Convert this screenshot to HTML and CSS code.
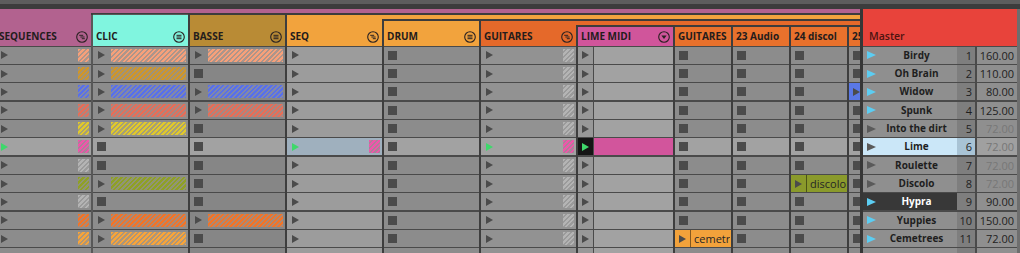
FILE: index.html
```html
<!DOCTYPE html>
<html lang="fr">
<head>
    <meta charset="UTF-8">
    <meta name="viewport" content="width=device-width, initial-scale=1.0">
    <title>Session</title>

    <link rel="stylesheet" href="styles.css">
</head>
<body>
    <svg class="defs" width="0" height="0" aria-hidden="true">
        <symbol id="i-menu" viewBox="0 0 12 12">
            <circle cx="6" cy="6" r="5.3" fill="none" stroke="currentColor" stroke-width="1.1"/>
            <path d="M3.5 4.3h5M3.5 6h5M3.5 7.7h5" stroke="currentColor" stroke-width="1"/>
        </symbol>
        <symbol id="i-fold" viewBox="0 0 12 12">
            <circle cx="6" cy="6" r="5.3" fill="none" stroke="currentColor" stroke-width="1.1"/>
            <path d="M3.2 4.3h4M4.4 6h4.2M5.8 7.7h3" stroke="currentColor" stroke-width="1"/>
        </symbol>
        <symbol id="i-drop" viewBox="0 0 12 12">
            <circle cx="6" cy="6" r="5.3" fill="none" stroke="currentColor" stroke-width="1.1"/>
            <path d="M3.4 4.6h5.2L6 8z" fill="currentColor"/>
        </symbol>
    </svg>

    <div class="topbar"></div>

    <div class="main">
        <div class="tracks">
            <!-- SEQUENCES group track -->
            <div class="track">
                <div class="head t-seqs"><span class="name">SEQUENCES</span><svg class="ico"><use href="#i-fold"/></svg></div>
                <div class="cells">
                    <div class="slot"><i class="play"></i><span class="mini c-salmon"></span></div>
                    <div class="slot"><i class="play"></i><span class="mini c-ochre"></span></div>
                    <div class="slot"><i class="play"></i><span class="mini c-blue"></span></div>
                    <div class="slot"><i class="play"></i><span class="mini c-red"></span></div>
                    <div class="slot"><i class="play"></i><span class="mini c-yellow"></span></div>
                    <div class="slot on"><i class="play go"></i><span class="mini c-pink"></span></div>
                    <div class="slot"><i class="play"></i><span class="mini c-grey"></span></div>
                    <div class="slot"><i class="play"></i><span class="mini c-olive"></span></div>
                    <div class="slot"><i class="play"></i><span class="mini c-grey"></span></div>
                    <div class="slot"><i class="play"></i><span class="mini c-orange"></span></div>
                    <div class="slot"><i class="play"></i><span class="mini c-lorange"></span></div>
                    <div class="slot"></div>
                </div>
            </div>

            <div class="group">
                <div class="band t-seqs"></div>
                <div class="group-row">
                    <div class="track sel">
                        <div class="head t-clic"><span class="name">CLIC</span><svg class="ico"><use href="#i-menu"/></svg></div>
                        <div class="cells">
                            <div class="slot"><i class="play"></i><span class="clip c-salmon"></span></div>
                            <div class="slot"><i class="play"></i><span class="clip c-ochre"></span></div>
                            <div class="slot"><i class="play"></i><span class="clip c-blue"></span></div>
                            <div class="slot"><i class="play"></i><span class="clip c-red"></span></div>
                            <div class="slot"><i class="play"></i><span class="clip c-yellow"></span></div>
                            <div class="slot on"><i class="stop"></i></div>
                            <div class="slot"><i class="stop"></i></div>
                            <div class="slot"><i class="play"></i><span class="clip c-olive"></span></div>
                            <div class="slot"><i class="stop"></i></div>
                            <div class="slot"><i class="play"></i><span class="clip c-orange"></span></div>
                            <div class="slot"><i class="play"></i><span class="clip c-lorange"></span></div>
                            <div class="slot"></div>
                        </div>
                    </div>

                    <div class="track">
                        <div class="head t-basse"><span class="name">BASSE</span><svg class="ico"><use href="#i-menu"/></svg></div>
                        <div class="cells dark">
                            <div class="slot"><i class="play"></i><span class="clip c-salmon"></span></div>
                            <div class="slot"><i class="stop"></i></div>
                            <div class="slot"><i class="play"></i><span class="clip c-blue"></span></div>
                            <div class="slot"><i class="play"></i><span class="clip c-red"></span></div>
                            <div class="slot"><i class="stop"></i></div>
                            <div class="slot on"><i class="stop"></i></div>
                            <div class="slot"><i class="stop"></i></div>
                            <div class="slot"><i class="stop"></i></div>
                            <div class="slot"><i class="stop"></i></div>
                            <div class="slot"><i class="play"></i><span class="clip c-orange"></span></div>
                            <div class="slot"><i class="stop"></i></div>
                            <div class="slot"></div>
                        </div>
                    </div>

                    <!-- SEQ group track -->
                    <div class="track">
                        <div class="head t-seq"><span class="name">SEQ</span><svg class="ico"><use href="#i-fold"/></svg></div>
                        <div class="cells light">
                            <div class="slot"><i class="play"></i></div>
                            <div class="slot"><i class="play"></i></div>
                            <div class="slot"><i class="play"></i></div>
                            <div class="slot"><i class="play"></i></div>
                            <div class="slot"><i class="play"></i></div>
                            <div class="slot on blue"><i class="play go"></i><span class="mini c-pink"></span></div>
                            <div class="slot"><i class="play"></i></div>
                            <div class="slot"><i class="play"></i></div>
                            <div class="slot"><i class="play"></i></div>
                            <div class="slot"><i class="play"></i></div>
                            <div class="slot"><i class="play"></i></div>
                            <div class="slot"></div>
                        </div>
                    </div>

                    <div class="group">
                        <div class="band t-seq"></div>
                        <div class="group-row">
                            <div class="track">
                                <div class="head t-seq"><span class="name">DRUM</span><svg class="ico"><use href="#i-menu"/></svg></div>
                                <div class="cells">
                                    <div class="slot"><i class="stop"></i></div>
                                    <div class="slot"><i class="stop"></i></div>
                                    <div class="slot"><i class="stop"></i></div>
                                    <div class="slot"><i class="stop"></i></div>
                                    <div class="slot"><i class="stop"></i></div>
                                    <div class="slot on"><i class="stop"></i></div>
                                    <div class="slot"><i class="stop"></i></div>
                                    <div class="slot"><i class="stop"></i></div>
                                    <div class="slot"><i class="stop"></i></div>
                                    <div class="slot"><i class="stop"></i></div>
                                    <div class="slot"><i class="stop"></i></div>
                                    <div class="slot"></div>
                                </div>
                            </div>

                            <!-- GUITARES group track -->
                            <div class="track">
                                <div class="head t-guit"><span class="name">GUITARES</span><svg class="ico"><use href="#i-fold"/></svg></div>
                                <div class="cells mid">
                                    <div class="slot"><i class="play"></i><span class="mini c-grey"></span></div>
                                    <div class="slot"><i class="play"></i><span class="mini c-grey"></span></div>
                                    <div class="slot"><i class="play"></i><span class="mini c-grey"></span></div>
                                    <div class="slot"><i class="play"></i><span class="mini c-grey"></span></div>
                                    <div class="slot"><i class="play"></i><span class="mini c-grey"></span></div>
                                    <div class="slot on"><i class="play go"></i><span class="mini c-pink"></span></div>
                                    <div class="slot"><i class="play"></i><span class="mini c-grey"></span></div>
                                    <div class="slot"><i class="play"></i><span class="mini c-grey"></span></div>
                                    <div class="slot"><i class="play"></i><span class="mini c-grey"></span></div>
                                    <div class="slot"><i class="play"></i><span class="mini c-grey"></span></div>
                                    <div class="slot"><i class="play"></i><span class="mini c-grey"></span></div>
                                    <div class="slot"></div>
                                </div>
                            </div>

                            <div class="group">
                                <div class="band t-guit"></div>
                                <div class="group-row">
                                    <div class="track">
                                        <div class="head t-lime"><span class="name">LIME MIDI</span><svg class="ico"><use href="#i-drop"/></svg></div>
                                        <div class="cells">
                                            <div class="slot midi"><span class="launch"><i class="play"></i></span></div>
                                            <div class="slot midi"><span class="launch"><i class="play"></i></span></div>
                                            <div class="slot midi"><span class="launch"><i class="play"></i></span></div>
                                            <div class="slot midi"><span class="launch"><i class="play"></i></span></div>
                                            <div class="slot midi"><span class="launch"><i class="play"></i></span></div>
                                            <div class="slot midi playing"><span class="launch"><i class="play go"></i></span></div>
                                            <div class="slot midi"><span class="launch"><i class="play"></i></span></div>
                                            <div class="slot midi"><span class="launch"><i class="play"></i></span></div>
                                            <div class="slot midi"><span class="launch"><i class="play"></i></span></div>
                                            <div class="slot midi"><span class="launch"><i class="play"></i></span></div>
                                            <div class="slot midi"><span class="launch"><i class="play"></i></span></div>
                                            <div class="slot midi"><span class="launch"></span></div>
                                        </div>
                                    </div>

                                    <div class="track narrow">
                                        <div class="head t-sub"><span class="name">GUITARES</span></div>
                                        <div class="cells">
                                            <div class="slot"><i class="stop"></i></div>
                                            <div class="slot"><i class="stop"></i></div>
                                            <div class="slot"><i class="stop"></i></div>
                                            <div class="slot"><i class="stop"></i></div>
                                            <div class="slot"><i class="stop"></i></div>
                                            <div class="slot on"><i class="stop"></i></div>
                                            <div class="slot"><i class="stop"></i></div>
                                            <div class="slot"><i class="stop"></i></div>
                                            <div class="slot"><i class="stop"></i></div>
                                            <div class="slot"><i class="stop"></i></div>
                                            <div class="slot filled"><span class="named n-lorange"><span class="launch"><i class="play"></i></span><span class="clip-name">cemetr</span></span></div>
                                            <div class="slot"></div>
                                        </div>
                                    </div>

                                    <div class="track narrow">
                                        <div class="head t-sub"><span class="name">23 Audio</span></div>
                                        <div class="cells">
                                            <div class="slot"><i class="stop"></i></div>
                                            <div class="slot"><i class="stop"></i></div>
                                            <div class="slot"><i class="stop"></i></div>
                                            <div class="slot"><i class="stop"></i></div>
                                            <div class="slot"><i class="stop"></i></div>
                                            <div class="slot on"><i class="stop"></i></div>
                                            <div class="slot"><i class="stop"></i></div>
                                            <div class="slot"><i class="stop"></i></div>
                                            <div class="slot"><i class="stop"></i></div>
                                            <div class="slot"><i class="stop"></i></div>
                                            <div class="slot"><i class="stop"></i></div>
                                            <div class="slot"></div>
                                        </div>
                                    </div>

                                    <div class="track narrow">
                                        <div class="head t-sub"><span class="name">24 discol</span></div>
                                        <div class="cells">
                                            <div class="slot"><i class="stop"></i></div>
                                            <div class="slot"><i class="stop"></i></div>
                                            <div class="slot"><i class="stop"></i></div>
                                            <div class="slot"><i class="stop"></i></div>
                                            <div class="slot"><i class="stop"></i></div>
                                            <div class="slot on"><i class="stop"></i></div>
                                            <div class="slot"><i class="stop"></i></div>
                                            <div class="slot filled"><span class="named n-olive"><span class="launch"><i class="play"></i></span><span class="clip-name">discolo</span></span></div>
                                            <div class="slot"><i class="stop"></i></div>
                                            <div class="slot"><i class="stop"></i></div>
                                            <div class="slot"><i class="stop"></i></div>
                                            <div class="slot"></div>
                                        </div>
                                    </div>

                                    <div class="track narrow">
                                        <div class="head t-sub"><span class="name">25</span></div>
                                        <div class="cells">
                                            <div class="slot"><i class="stop"></i></div>
                                            <div class="slot"><i class="stop"></i></div>
                                            <div class="slot filled"><span class="named n-blue"><span class="launch"><i class="play"></i></span></span></div>
                                            <div class="slot"><i class="stop"></i></div>
                                            <div class="slot"><i class="stop"></i></div>
                                            <div class="slot on"><i class="stop"></i></div>
                                            <div class="slot"><i class="stop"></i></div>
                                            <div class="slot"><i class="stop"></i></div>
                                            <div class="slot"><i class="stop"></i></div>
                                            <div class="slot"><i class="stop"></i></div>
                                            <div class="slot"><i class="stop"></i></div>
                                            <div class="slot"></div>
                                        </div>
                                    </div>
                                </div>
                            </div>
                        </div>
                    </div>
                </div>
            </div>
        </div>

        <div class="master">
            <div class="master-head">Master</div>
            <div class="scenes">
                <div class="scene"><span class="scene-main"><i class="play big lit"></i><span class="scene-name">Birdy</span></span><span class="scene-num">1</span><span class="scene-tempo">160.00</span></div>
                <div class="scene"><span class="scene-main"><i class="play big lit"></i><span class="scene-name">Oh Brain</span></span><span class="scene-num">2</span><span class="scene-tempo">110.00</span></div>
                <div class="scene"><span class="scene-main"><i class="play big lit"></i><span class="scene-name">Widow</span></span><span class="scene-num">3</span><span class="scene-tempo">80.00</span></div>
                <div class="scene"><span class="scene-main"><i class="play big lit"></i><span class="scene-name">Spunk</span></span><span class="scene-num">4</span><span class="scene-tempo">125.00</span></div>
                <div class="scene"><span class="scene-main"><i class="play big"></i><span class="scene-name">Into the dirt</span></span><span class="scene-num">5</span><span class="scene-tempo dim">72.00</span></div>
                <div class="scene sel"><span class="scene-main"><i class="play big"></i><span class="scene-name">Lime</span></span><span class="scene-num">6</span><span class="scene-tempo dim">72.00</span></div>
                <div class="scene"><span class="scene-main"><i class="play big"></i><span class="scene-name">Roulette</span></span><span class="scene-num">7</span><span class="scene-tempo dim">72.00</span></div>
                <div class="scene"><span class="scene-main"><i class="play big"></i><span class="scene-name">Discolo</span></span><span class="scene-num">8</span><span class="scene-tempo dim">72.00</span></div>
                <div class="scene cur"><span class="scene-main"><i class="play big lit"></i><span class="scene-name">Hypra</span></span><span class="scene-num">9</span><span class="scene-tempo">90.00</span></div>
                <div class="scene"><span class="scene-main"><i class="play big lit"></i><span class="scene-name">Yuppies</span></span><span class="scene-num">10</span><span class="scene-tempo">150.00</span></div>
                <div class="scene"><span class="scene-main"><i class="play big lit"></i><span class="scene-name">Cemetrees</span></span><span class="scene-num">11</span><span class="scene-tempo">72.00</span></div>
                <div class="scene"><span class="scene-main"></span><span class="scene-num"></span><span class="scene-tempo"></span></div>
            </div>
        </div>
    </div>
</body>
</html>
```

FILE: styles.css
```css
* {
    box-sizing: border-box;
}
body {
    margin: 0;
    width: 1020px;
    height: 253px;
    overflow: hidden;
    background-color: #3c3c3c;
    font-family: "Open Sans", "Liberation Sans", sans-serif;
    color: #1e1e1e;
}
.defs {
    position: absolute;
    width: 0;
    height: 0;
}
.topbar {
    height: 9px;
    border-top: 4px solid #5d5d5d;
}
.main {
    display: flex;
    height: 244px;
}

/* track area */
.tracks {
    flex: 1;
    min-width: 0;
    display: flex;
    overflow: hidden;
}
.tracks > .track:first-child {
    margin-left: -6px;
}
.group {
    flex-shrink: 0;
    display: flex;
    flex-direction: column;
}
.band {
    height: 4px;
    margin-bottom: 2px;
}
.group-row {
    flex: 1;
    display: flex;
}
.track {
    flex-shrink: 0;
    width: 97px;
    display: flex;
    flex-direction: column;
    border-left: 2px solid #3e3e3e;
}
.track.narrow {
    width: 58px;
}
.track.sel {
    border-left-color: #585858;
}
.track.sel .head {
    box-shadow: 0 -1px 0 #585858;
}
.head {
    flex: 1;
    min-width: 0;
    display: flex;
    align-items: flex-end;
    padding: 0 3px 3px 3px;
    color: #241c1c;
}
.head .name {
    flex: 1;
    min-width: 0;
    font-size: 10px;
    font-weight: 700;
    line-height: 14px;
    white-space: nowrap;
    overflow: hidden;
}
.head .ico {
    flex-shrink: 0;
    width: 12px;
    height: 12px;
    margin-left: 2px;
    color: #2a2222;
}
.t-seqs { background-color: #b2628f; }
.t-clic { background-color: #80f5df; }
.t-basse { background-color: #b98b35; }
.t-seq { background-color: #f2a33d; }
.t-guit { background-color: #e5692a; }
.t-lime { background-color: #d0559b; }
.t-sub { background-color: #e8712c; }

/* clip slots */
.cells {
    height: 207.5px;
    display: grid;
    grid-auto-rows: 17px;
    row-gap: 1.33px;
    padding-top: 1.33px;
    align-content: start;
    overflow: hidden;
    background-color: #4a4a4a;
}
.slot {
    display: flex;
    align-items: center;
    min-width: 0;
    padding-left: 4px;
    background-color: #8c8c8c;
}
.cells.dark .slot { background-color: #868686; }
.cells.mid .slot { background-color: #929292; }
.cells.light .slot { background-color: #9c9c9c; }
.cells .slot.on { background-color: #a2a2a2; }
.cells .slot.blue { background-color: #9fb0be; }

.play {
    flex-shrink: 0;
    width: 0;
    height: 0;
    margin-left: 1px;
    border-left: 7px solid #4b4b4b;
    border-top: 4px solid transparent;
    border-bottom: 4px solid transparent;
}
.play.go { border-left-color: #3fd86b; }
.play.big {
    margin-left: 0;
    border-left-width: 9px;
    border-top-width: 4.5px;
    border-bottom-width: 4.5px;
    border-left-color: #5a5a5a;
}
.play.lit { border-left-color: #5ccdf2; }
.stop {
    flex-shrink: 0;
    width: 9px;
    height: 9px;
    background-color: #4b4b4b;
}

.clip,
.mini {
    height: 13px;
    background-color: var(--c);
    background-image: repeating-linear-gradient(135deg, transparent 0 1.8px, rgba(145, 145, 145, 0.72) 1.8px 3.4px);
}
.clip {
    flex: 1;
    margin: 0 2px 0 6px;
}
.mini {
    width: 11px;
    margin: 0 2px 0 auto;
}
.c-salmon { --c: #f6a07a; }
.c-ochre { --c: #cf962a; }
.c-blue { --c: #5870ea; }
.c-red { --c: #e66e58; }
.c-yellow { --c: #e0c82c; }
.c-pink { --c: #ee56aa; }
.c-grey { --c: #b4b4b4; }
.c-olive { --c: #8fa026; }
.c-orange { --c: #f27428; }
.c-lorange { --c: #f7a43a; }

/* midi track slots */
.slot.midi {
    padding-left: 0;
    background-color: #a2a2a2;
}
.slot.midi .launch {
    width: 16px;
    height: 100%;
    display: flex;
    align-items: center;
    padding-left: 3px;
    background-color: #989898;
    border-right: 1px solid #4a4a4a;
}
.slot.midi.playing {
    background-color: #d2559c;
}
.slot.midi.playing .launch {
    background-color: #151515;
}

/* clips with a name */
.slot.filled {
    padding-left: 0;
}
.named {
    flex: 1;
    min-width: 0;
    height: 100%;
    display: flex;
    align-items: center;
}
.named .launch {
    flex-shrink: 0;
    width: 16px;
    height: 100%;
    display: flex;
    align-items: center;
    padding-left: 3px;
    border-right: 1px solid rgba(0, 0, 0, 0.45);
}
.clip-name {
    padding-left: 3px;
    font-size: 11px;
    color: #262626;
    white-space: nowrap;
    overflow: hidden;
}
.n-lorange { background-color: #f2a23b; }
.n-olive { background-color: #8a9a2b; }
.n-blue { background-color: #5a78e6; }

/* master / scenes */
.master {
    flex-shrink: 0;
    width: 160px;
    display: flex;
    flex-direction: column;
    border-left: 3px solid #363636;
    border-right: 3px solid #6e6e6e;
}
.master-head {
    flex: 1;
    display: flex;
    align-items: flex-end;
    padding: 0 0 3px 6px;
    background-color: #e8433b;
    color: #4d1411;
    font-size: 10.5px;
    font-weight: 600;
    line-height: 14px;
}
.scenes {
    height: 207.5px;
    display: grid;
    grid-auto-rows: 17px;
    row-gap: 1.33px;
    padding-top: 1.33px;
    align-content: start;
    overflow: hidden;
    background-color: #4a4a4a;
}
.scene {
    display: flex;
    font-size: 11px;
    line-height: 17px;
}
.scene-main {
    flex: 1;
    display: flex;
    align-items: center;
    padding-left: 4px;
    background-color: #8f8f8f;
}
.scene-name {
    flex: 1;
    text-align: center;
    font-size: 10px;
    font-weight: 700;
    white-space: nowrap;
}
.scene-num {
    width: 18px;
    padding-right: 3px;
    text-align: right;
    background-color: #7e7e7e;
}
.scene-tempo {
    width: 40px;
    margin-left: 2px;
    padding-right: 3px;
    text-align: right;
    background-color: #8f8f8f;
}
.scene-tempo.dim {
    color: #777;
}
.scene.sel .scene-main { background-color: #cbe7f8; }
.scene.sel .scene-num { background-color: #a8c3d5; }
.scene.sel .scene-tempo { background-color: #a0a0a0; }
.scene.cur .scene-main {
    background-color: #383838;
    color: #fff;
}
```
